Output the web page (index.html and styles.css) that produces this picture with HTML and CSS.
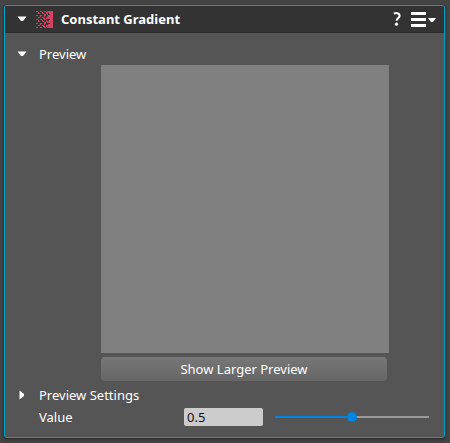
FILE: index.html
```html
<!DOCTYPE html>
<html lang="en">
<head>
<meta charset="utf-8">
<title>Constant Gradient</title>
<link rel="stylesheet" href="styles.css">
</head>
<body>
<section class="card">
  <header class="header">
    <button class="toggle" aria-label="Collapse component"><svg width="10" height="6" viewBox="0 0 10 6"><path d="M.5.500h9L6 5H4z" fill="#fff"/></svg></button>
    <svg class="logo" width="17" height="17" viewBox="0 0 17 17" shape-rendering="crispEdges">
      <g stroke="#cf4262" stroke-width="1" fill="none">
        <path stroke-dasharray="2 2" d="M0 .5h13M0 4.500h13M0 8.500h13M0 12.500h13M0 16.500h13"/>
        <path stroke-dasharray="2 2" d="M2 2.500h11M2 6.500h11M2 10.500h11M2 14.500h11"/>
        <path stroke-dasharray="1 3" d="M2 1.500h11M4 5.500h9M2 9.500h11M4 13.500h9"/>
        <path stroke-dasharray="2 1" d="M8 3.500h6M7 7.500h7M8 11.500h6M7 15.500h7"/>
      </g>
      <path d="M13 0h4v17h-4z" fill="#d34464"/>
      <path d="M11 0h2v2h-2zM11 5h2v3h-2zM11 10h2v2h-2zM11 14h2v3h-2z" fill="#c43e5c"/>
      <path d="M12 3h2v1h-2zM12 8h2v1h-2zM12 12h2v1h-2z" fill="#333"/>
    </svg>
    <h1 class="title">Constant Gradient</h1>
    <button class="help" aria-label="Help"><svg width="8" height="14" viewBox="0 0 8 14"><path d="M.8 1.700C2.500.8 6.600.5 6.600 3.700c0 2.500-3 2.500-3 5" fill="none" stroke="#fff" stroke-width="2"/><circle cx="3.500" cy="12.200" r="1.600" fill="#fff"/></svg></button>
    <button class="menu" aria-label="Component menu"><svg width="26" height="15" viewBox="0 0 26 15"><path d="M1 0h15v3H1zM1 6h15v3H1zM1 12h15v3H1zM18 6h8l-3 4h-2z" fill="#fff"/></svg></button>
  </header>
  <div class="content">
    <div class="row">
      <button class="toggle" aria-label="Collapse Preview"><svg width="10" height="6" viewBox="0 0 10 6"><path d="M.5.500h9L6 5H4z" fill="#fff"/></svg></button>
      <span>Preview</span>
    </div>
    <div class="preview">
      <div class="image" role="img" aria-label="Gradient preview"></div>
      <button class="larger">Show Larger Preview</button>
    </div>
    <div class="row">
      <button class="toggle" aria-label="Expand Preview Settings"><svg width="10" height="10" viewBox="0 0 10 10"><path d="M2.500.5L7 4v2L2.500 9.500z" fill="#fff"/></svg></button>
      <span>Preview Settings</span>
    </div>
    <div class="row">
      <label class="label" for="value">Value</label>
      <input class="number" id="value" type="text" value="0.5">
      <input class="slider" type="range" min="0" max="1" step="0.01" value="0.5" aria-label="Value slider">
    </div>
  </div>
</section>
</body>
</html>
```
FILE: styles.css
```css
* {
  box-sizing: border-box;
}

body {
  margin: 0;
  padding: 5px;
  padding-left: 4px;
  background: #444;
  color: #fff;
  font: 13px/22px "Noto Sans", "Open Sans", sans-serif;
}

button {
  padding: 0;
  border: 0;
  background: none;
  color: inherit;
  font: inherit;
}

svg {
  display: block;
}

.card {
  border: 1px solid #00a1c9;
  border-radius: 3px;
  background: #555;
  box-shadow: 0 1px 3px #222;
  overflow: hidden;
}

.header {
  display: flex;
  align-items: center;
  height: 27px;
  padding: 0 8px 0 12px;
  border-bottom: 1px solid #2b2b2b;
  background: #333;
}

.toggle {
  display: grid;
  place-items: center;
  flex: none;
  width: 10px;
  height: 22px;
}

.logo {
  margin-left: 9px;
}

.title {
  flex: 1;
  margin: 0 0 0 8px;
  font-size: 13px;
  font-weight: 700;
}

.menu {
  margin-left: 9px;
}

.content {
  padding: 10px 15px 9px 12px;
}

.row {
  display: flex;
  align-items: center;
  height: 22px;
}

.row .toggle {
  margin-right: 12px;
}

.preview {
  padding: 0 40px 3px 84px;
}

.image {
  aspect-ratio: 1;
  background: #808080;
}

.larger {
  display: block;
  width: calc(100% - 2px);
  height: 24px;
  margin: 4px 0 0;
  border-radius: 4px;
  background: linear-gradient(#777, #666);
}

.label {
  width: 145px;
  padding-left: 22px;
}

.number {
  width: 79px;
  height: 18px;
  margin: 0 12px 0 22px;
  padding: 0 3px;
  border: 0;
  border-radius: 2px;
  background: #ccc;
  color: #111;
  font: inherit;
}

.label,
.number {
  flex: none;
}

.slider {
  flex: 1;
  min-width: 0;
  height: 10px;
  margin: 0;
  appearance: none;
  background: linear-gradient(90deg, #0085e2 50%, #999 50%) center / 100% 2px no-repeat;
}

.slider::-webkit-slider-thumb {
  appearance: none;
  width: 10px;
  height: 10px;
  border-radius: 50%;
  background: #0085e2;
}
```
